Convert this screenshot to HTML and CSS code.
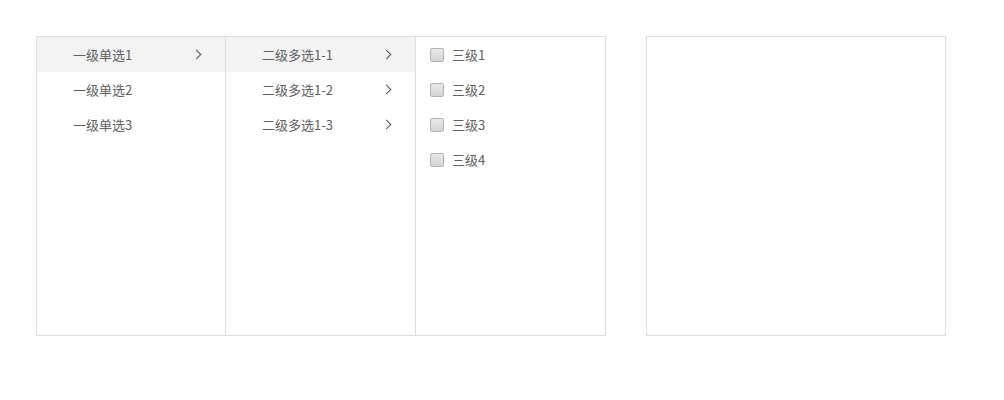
FILE: index.html
```
<!DOCTYPE html>
<html>
<head>
    <title>级联选择</title>
    <link rel="stylesheet" href="styles.css">
</head>
<body>
    <div class="wrap">
        <div class="cascader">
            <ul class="col">
                <li class="item active"><span>一级单选1</span><i class="arrow"></i></li>
                <li class="item"><span>一级单选2</span></li>
                <li class="item"><span>一级单选3</span></li>
            </ul>
            <ul class="col">
                <li class="item active"><span>二级多选1-1</span><i class="arrow"></i></li>
                <li class="item"><span>二级多选1-2</span><i class="arrow"></i></li>
                <li class="item"><span>二级多选1-3</span><i class="arrow"></i></li>
            </ul>
            <ul class="col last">
                <li class="check"><span class="box"></span><span>三级1</span></li>
                <li class="check"><span class="box"></span><span>三级2</span></li>
                <li class="check"><span class="box"></span><span>三级3</span></li>
                <li class="check"><span class="box"></span><span>三级4</span></li>
            </ul>
        </div>
        <div class="result"></div>
    </div>
</body>
</html>
```

FILE: styles.css
```
body {
    margin: 0;
    padding: 36px;
    background: #fff;
    color: #606060;
    font-family: "Noto Sans CJK SC", "Noto Sans", sans-serif;
    font-size: 13px;
}
.wrap {
    display: flex;
    gap: 40px;
    align-items: flex-start;
}
.cascader {
    display: flex;
    width: 568px;
    height: 298px;
    border: 1px solid #ddd;
}
.col {
    list-style: none;
    margin: 0;
    padding: 0;
    width: 188px;
    border-right: 1px solid #ddd;
}
.col + .col {
    width: 189px;
}
.col.last {
    border-right: none;
}
.item {
    display: flex;
    align-items: center;
    justify-content: space-between;
    height: 35px;
    padding: 0 23px 0 36px;
    cursor: pointer;
}
.item.active {
    background: #f3f3f3;
}
.arrow {
    width: 6px;
    height: 6px;
    border-top: 1px solid #555;
    border-right: 1px solid #555;
    transform: rotate(45deg);
    margin-right: 2px;
}
.check {
    display: flex;
    align-items: center;
    gap: 8px;
    height: 35px;
    padding-left: 14px;
}
.box {
    width: 12px;
    height: 12px;
    border: 1px solid #b4b4b4;
    border-radius: 2px;
    background: linear-gradient(#e8e8e8, #d4d4d4);
}
.result {
    width: 298px;
    height: 298px;
    border: 1px solid #ddd;
}
```
